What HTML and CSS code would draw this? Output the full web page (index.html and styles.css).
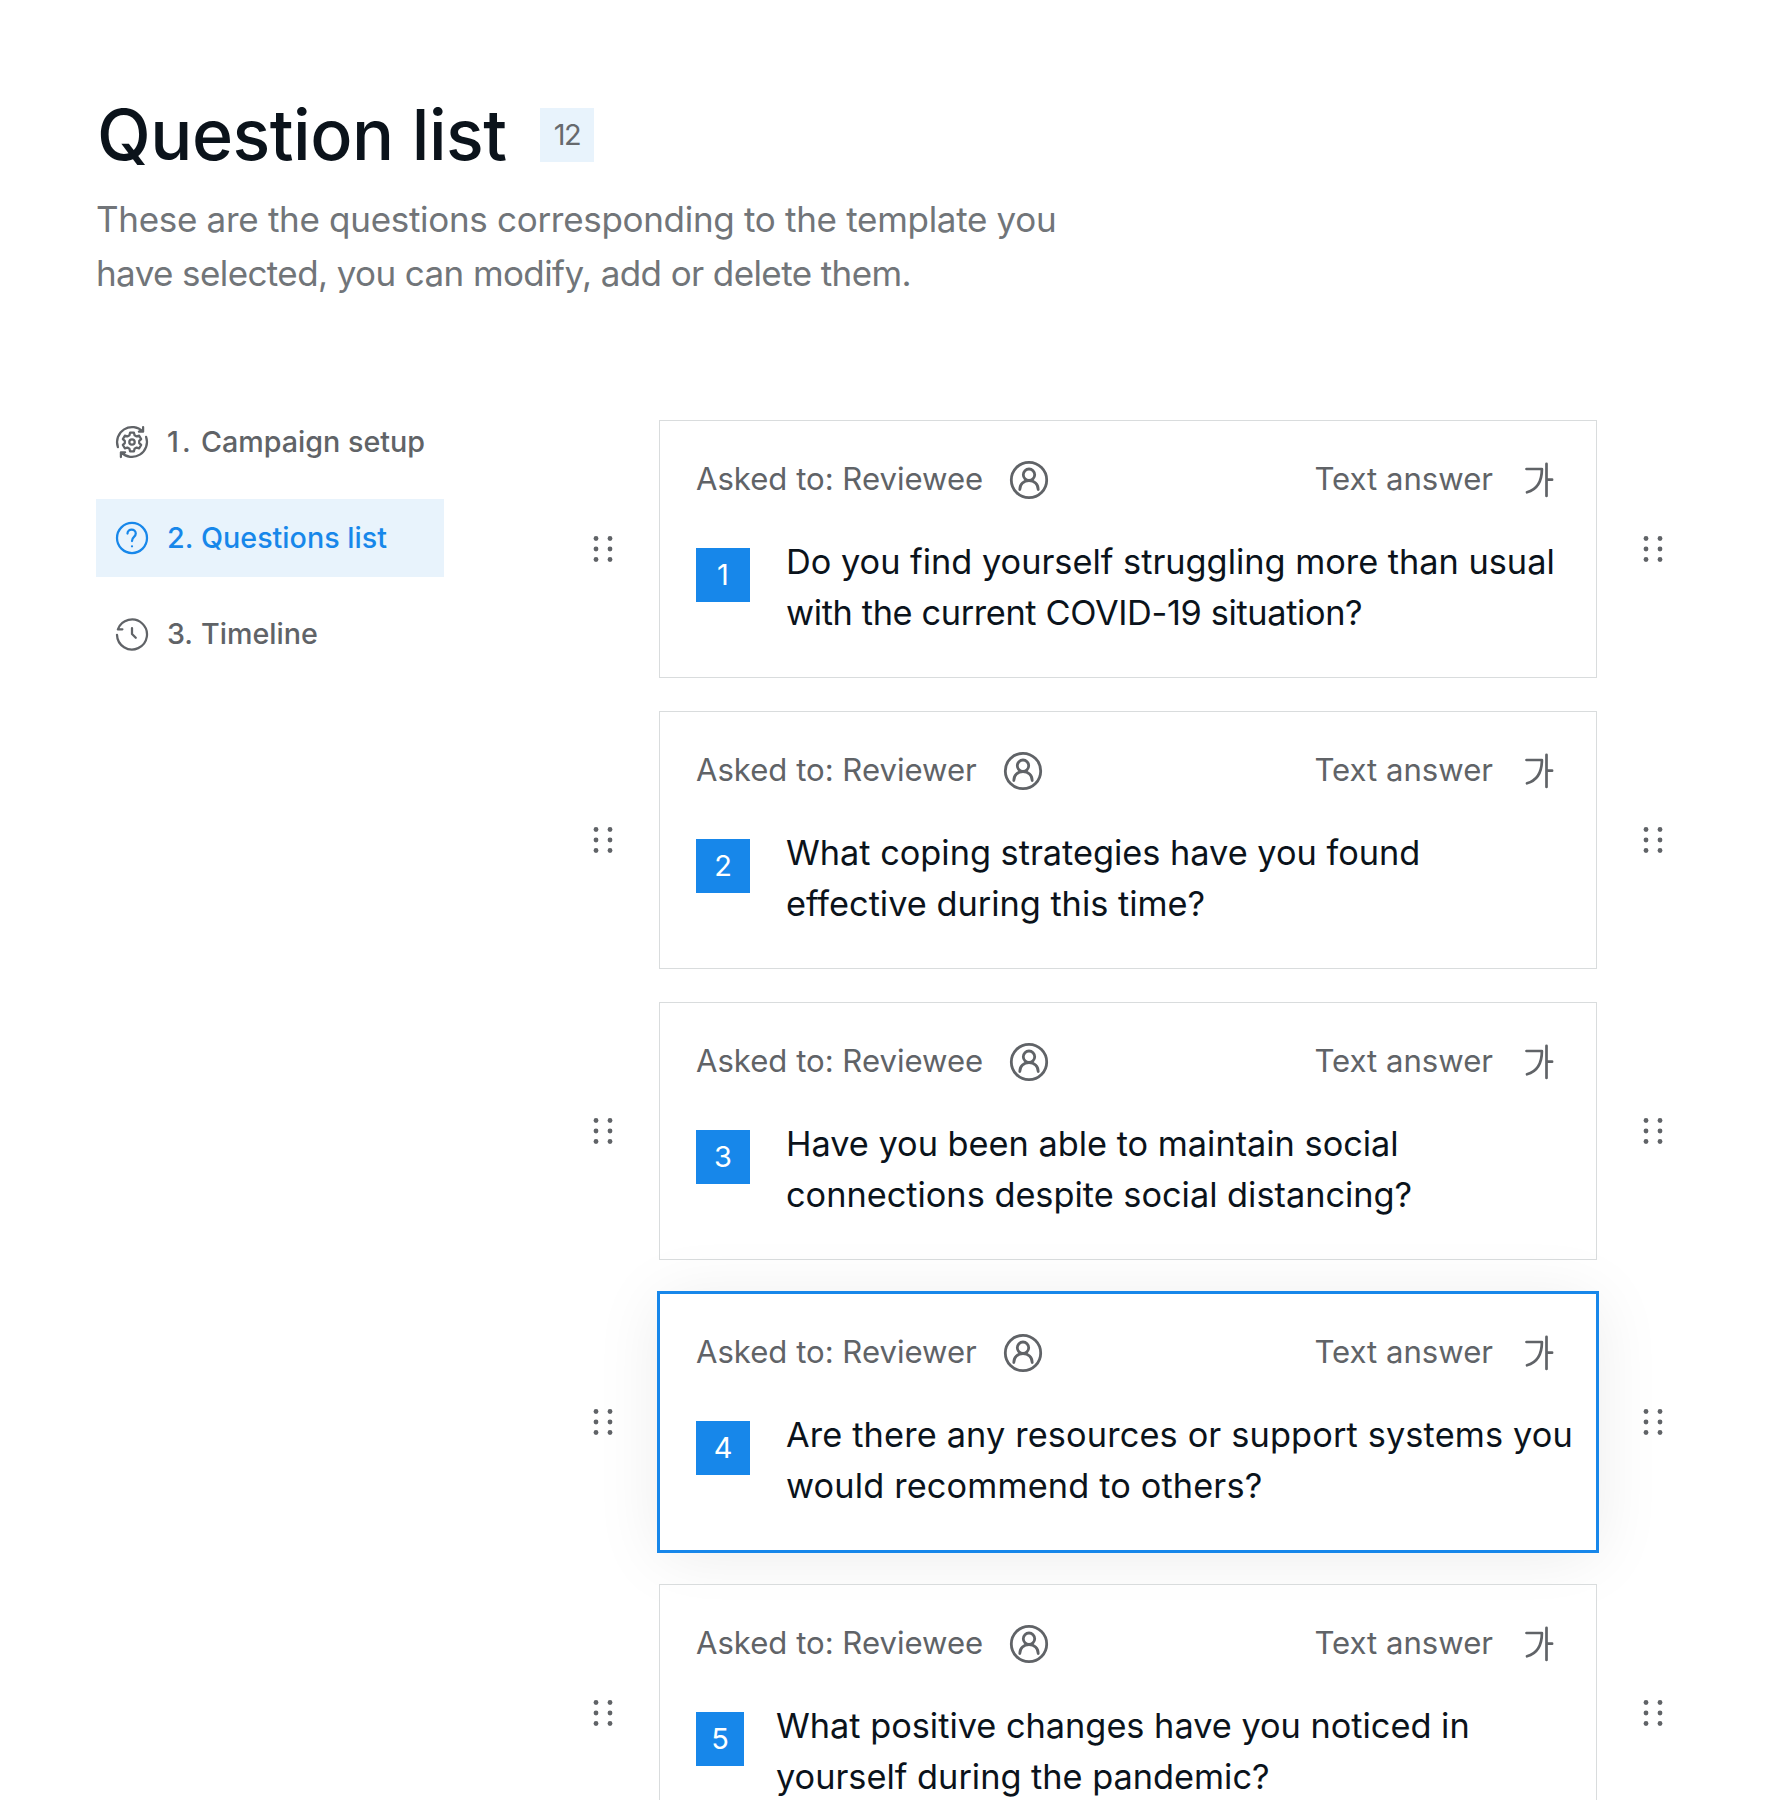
FILE: index.html
```html
<!DOCTYPE html>
<html lang="en">
<head>
  <meta charset="UTF-8" />
  <title>Question list</title>
  <link rel="stylesheet" href="styles.css">
</head>
<body>

  <!-- shared icons -->
  <svg class="sprite" width="0" height="0">
    <symbol id="user" viewBox="0 0 40 40">
      <circle cx="20" cy="20" r="17.7" />
      <circle cx="20" cy="14.7" r="5.7" />
      <path d="M10.8 29.5c0-5.6 4-9 9.2-9s9.2 3.4 9.2 9" />
    </symbol>
    <symbol id="text" viewBox="0 0 36 36">
      <path d="M6.500 7h15.400C21.900 20 17 27.500 7 30.300M26.500 1.800v32.200M26.500 17.700h5.600" />
    </symbol>
    <symbol id="drag" viewBox="0 0 20 28">
      <circle cx="3" cy="3.500" r="2.400" /><circle cx="17" cy="3.500" r="2.400" />
      <circle cx="3" cy="14" r="2.400" /><circle cx="17" cy="14" r="2.400" />
      <circle cx="3" cy="24.500" r="2.400" /><circle cx="17" cy="24.500" r="2.400" />
    </symbol>
  </svg>

  <header class="header">
    <div class="title-row">
      <h1>Question list</h1>
      <span class="count">12</span>
    </div>
    <p class="intro">These are the questions corresponding to the template you<br><span class="tight">have selected, you can modify, add or delete them.</span></p>
  </header>

  <main class="content">
    <nav class="steps">
      <a class="step">
        <svg class="step-icon" viewBox="0 0 24 24">
          <circle cx="12" cy="12" r="1.800" />
          <path d="M10.700 5.800h2.600l.4 1.700 1.400.8 1.700-.5 1.300 2.300-1.300 1.200v1.400l1.300 1.200-1.300 2.300-1.700-.5-1.400.8-.4 1.700h-2.600l-.4-1.700-1.400-.8-1.700.5-1.300-2.300 1.300-1.200v-1.400l-1.300-1.200 1.300-2.300 1.700.5 1.400-.8z" />
          <path d="M2.600 15.400A10 10 0 0 1 19.200 5.100M19.400 2v3.100h-2.800M21.400 8.600A10 10 0 0 1 4.800 18.900M4.600 22v-3.100h2.800" />
        </svg>
        <span class="num first">1.</span><span>Campaign setup</span>
      </a>
      <a class="step active">
        <svg class="step-icon" viewBox="0 0 24 24">
          <circle cx="12" cy="12" r="10" />
          <path d="M9 9c0-3.500 5.500-3.500 5.500 0 0 2.500-2.500 2-2.500 5M12 17.500v.01" />
        </svg>
        <span class="num">2.</span><span>Questions list</span>
      </a>
      <a class="step">
        <svg class="step-icon" viewBox="0 0 24 24">
          <path d="M12 8v4l2.500 2.500M2 12.600a10 10 0 1 0 .6-3.700h3" />
        </svg>
        <span class="num">3.</span><span>Timeline</span>
      </a>
    </nav>

    <section class="questions" id="questions"></section>
  </main>

  <script>
    const questions = [
      { to: "Reviewee", text: "Do you find yourself struggling more than usual<br><span class='tight'>with the current COVID-19 situation?</span>" },
      { to: "Reviewer", text: "What coping strategies have you found<br>effective during this time?" },
      { to: "Reviewee", text: "Have you been able to maintain social<br>connections despite social distancing?" },
      { to: "Reviewer", text: "Are there any resources or support systems you<br>would recommend to others?", selected: true },
      { to: "Reviewee", text: "What positive changes have you noticed in<br>yourself during the pandemic?", narrow: true }
    ];

    const drag = '<svg class="drag"><use href="#drag"/></svg>';

    document.getElementById("questions").innerHTML = questions.map((q, i) => `
      <div class="row">
        ${drag}
        <article class="card ${q.selected ? "selected" : ""} ${q.narrow ? "narrow" : ""}">
          <div class="card-head">
            <span class="asked">Asked to: ${q.to}</span>
            <svg class="user-icon"><use href="#user"/></svg>
            <span class="answer">Text answer</span>
            <svg class="text-icon"><use href="#text"/></svg>
          </div>
          <div class="card-body">
            <span class="index">${i + 1}</span>
            <p class="question">${q.text}</p>
          </div>
        </article>
        ${drag}
      </div>`).join("");
  </script>

</body>
</html>
```
FILE: styles.css
```css
* {
  box-sizing: border-box;
}
body {
  margin: 0;
  padding: 96px 96px 0;
  height: 1800px;
  overflow: hidden;
  font-family: Inter, "Liberation Sans", sans-serif;
  background: #fff;
  color: #0b131b;
}
h1, p {
  margin: 0;
}
svg {
  display: block;
  flex: none;
  fill: none;
  stroke: currentColor;
  stroke-linecap: round;
  stroke-linejoin: round;
}
.sprite {
  position: absolute;
}
.header {
  height: 307px;
}
.title-row {
  display: flex;
  align-items: center;
  height: 78px;
}
h1 {
  width: 444px;
  padding-left: 1px;
  font-size: 70px;
  font-weight: 500;
  line-height: 76px;
  letter-spacing: -0.5px;
  white-space: nowrap;
}
.count {
  width: 54px;
  height: 54px;
  line-height: 53px;
  text-align: center;
  font-size: 29px;
  letter-spacing: -1.5px;
  background: #e8f3fc;
  color: #66696d;
}
.intro {
  margin-top: 18px;
  font-size: 35px;
  line-height: 54px;
  letter-spacing: -0.3px;
  color: #717579;
  white-space: nowrap;
}
.intro .tight {
  letter-spacing: -0.6px;
}
.content {
  display: flex;
  align-items: flex-start;
}
.steps {
  display: flex;
  flex-direction: column;
  gap: 18px;
  width: 348px;
}
.step {
  display: flex;
  align-items: center;
  height: 78px;
  padding-left: 18px;
  font-size: 28.7px;
  font-weight: 500;
  color: #606367;
  white-space: nowrap;
}
.step.active {
  background: #e8f3fc;
  color: #1787ea;
}
.step-icon {
  width: 36px;
  height: 36px;
  margin-right: 17px;
  stroke-width: 1.5;
}
.step span {
  padding-bottom: 2px;
}
.num {
  width: 34px;
}
.num.first {
  letter-spacing: 3px;
}
.questions {
  display: flex;
  flex-direction: column;
  gap: 33px;
  margin: 17px 0 0 149px;
}
.row {
  display: flex;
  align-items: center;
  height: 258px;
}
.drag {
  width: 20px;
  height: 28px;
  fill: #606367;
  stroke: none;
}
.card {
  width: 938px;
  height: 258px;
  margin: 0 46px;
  padding: 39px 0 0 36px;
  border: 1px solid #d9dcdd;
  background: rgba(255, 255, 255, 0.6);
  white-space: nowrap;
}
.card.selected {
  outline: 3px solid #1787ea;
  outline-offset: -1px;
  border-color: transparent;
  background: #fff;
  box-shadow: 0 6px 64px rgba(0, 0, 0, 0.08);
}
.card-head {
  display: flex;
  align-items: center;
  height: 40px;
  font-size: 31.1px;
  color: #606367;
}
.card-head span {
  padding-bottom: 2px;
}
.user-icon {
  width: 40px;
  height: 40px;
  margin-left: 26px;
  stroke-width: 2.800;
}
.answer {
  margin-left: auto;
}
.text-icon {
  width: 36px;
  height: 36px;
  margin: 0 40px 0 27px;
  stroke-width: 2.700;
}
.card-body {
  display: flex;
  padding-top: 38px;
}
.index {
  width: 54px;
  height: 54px;
  margin: 10px 36px 0 0;
  line-height: 53px;
  text-align: center;
  font-size: 29px;
  background: #1787ea;
  color: #fff;
}
.narrow .index {
  width: 48px;
  margin-right: 32px;
}
.question {
  margin-top: -2px;
  font-size: 34.3px;
  line-height: 51px;
}
.question .tight {
  letter-spacing: -0.35px;
}
.selected .question {
  letter-spacing: 0.15px;
}
```
